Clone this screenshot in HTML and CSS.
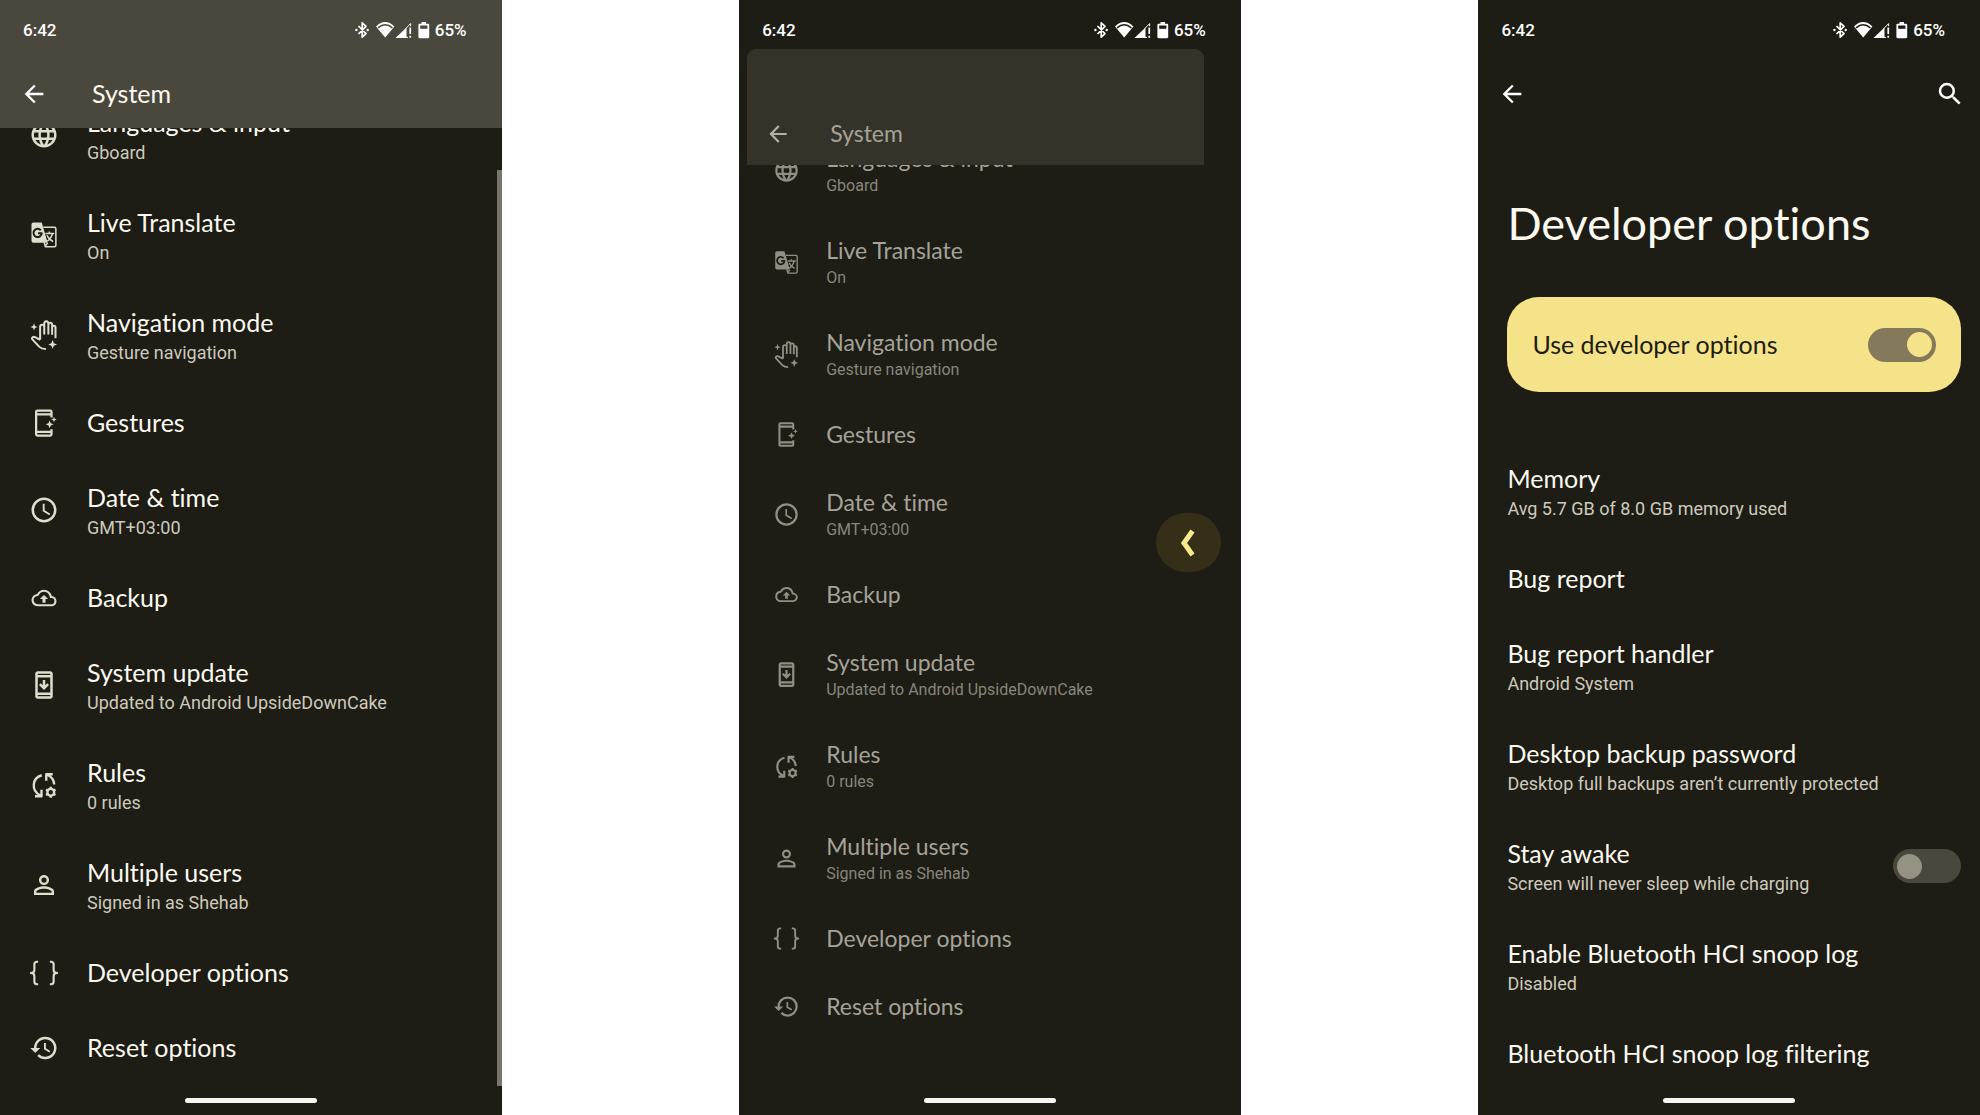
FILE: index.html
```html
<!DOCTYPE html>
<html lang="en">
<head>
    <meta charset="UTF-8">
    <meta name="viewport" content="width=device-width, initial-scale=1.0">
    <title>Predictive back gesture</title>
    <link rel="stylesheet" href="styles.css">
</head>
<body>
    <!-- Icon set -->
    <svg class="icon-defs" aria-hidden="true">
        <symbol id="i-back" viewBox="0 0 24 24"><path d="M20 11H7.83l5.59-5.59L12 4l-8 8 8 8 1.41-1.41L7.83 13H20z"/></symbol>
        <symbol id="i-search" viewBox="0 0 24 24"><path d="M15.5 14h-.79l-.28-.27A6.47 6.47 0 0 0 16 9.5 6.5 6.5 0 1 0 9.5 16c1.61 0 3.09-.59 4.23-1.57l.27.28v.79l5 4.99L20.49 19zm-6 0a4.5 4.5 0 1 1 0-9 4.5 4.5 0 0 1 0 9z"/></symbol>
        <symbol id="i-globe" viewBox="0 0 24 24"><path d="M11.99 2C6.47 2 2 6.48 2 12s4.47 10 9.99 10C17.52 22 22 17.52 22 12S17.52 2 11.99 2zm6.93 6h-2.95a15.65 15.65 0 0 0-1.38-3.56A8.03 8.03 0 0 1 18.92 8zM12 4.04c.83 1.2 1.48 2.53 1.91 3.96h-3.82c.43-1.43 1.08-2.76 1.91-3.96zM4.26 14C4.1 13.36 4 12.69 4 12s.1-1.36.26-2h3.38c-.08.66-.14 1.32-.14 2s.06 1.34.14 2zm.82 2h2.95c.32 1.25.78 2.45 1.38 3.56A7.99 7.99 0 0 1 5.08 16zm2.95-8H5.08a7.99 7.99 0 0 1 4.33-3.56A15.65 15.65 0 0 0 8.03 8zM12 19.96c-.83-1.2-1.48-2.53-1.91-3.96h3.82c-.43 1.43-1.08 2.76-1.91 3.96zM14.34 14H9.66c-.09-.66-.16-1.32-.16-2s.07-1.35.16-2h4.68c.09.65.16 1.32.16 2s-.07 1.34-.16 2zm.25 5.56c.6-1.11 1.06-2.31 1.38-3.56h2.95a8.03 8.03 0 0 1-4.33 3.56zM16.36 14c.08-.66.14-1.32.14-2s-.06-1.34-.14-2h3.38c.16.64.26 1.31.26 2s-.1 1.36-.26 2z"/></symbol>
        <symbol id="i-translate" viewBox="0 0 24 24">
            <path d="M3.600 2H10.200L14.900 18.200H3.600C2.700 18.200 2 17.500 2 16.600V3.600C2 2.700 2.700 2 3.600 2z"/>
            <g class="stroke">
                <path stroke-width="1.200" d="M11.500 5.700H20.300C21 5.700 21.500 6.200 21.500 6.900V20.200C21.500 20.900 21 21.400 20.300 21.400H13.200L12.200 18"/>
                <path stroke-width="1.200" d="M13.100 10.700H20.200M16.300 9.200V10.700M18.800 10.700C18.300 13.200 16.500 15.600 14.600 17M14.300 12.300C15.400 14.400 17.300 16.300 19.300 17.300M15 18.300L12.700 21.200"/>
                <path class="cut" stroke-width="1.600" d="M9.400 8.200A3.300 3.300 0 1 0 10.200 10.600H7.200"/>
            </g>
        </symbol>
        <symbol id="i-hand" viewBox="0 0 24 24">
            <g class="stroke" stroke-width="1.600">
                <path d="M8.900 15.800V5.400C8.900 3.200 12.200 3.200 12.200 5.400V11.500M12.200 5.400V3C12.200.3 15.500.3 15.500 3V11.500M15.500 4C15.500 1.500 18.500 1.500 18.500 4V11.800M18.500 6C18.500 4.200 21.200 4.200 21.200 6V14.500M8.900 15.800L4.800 13.700C3.200 13 1.700 14.500 2.700 15.500L8.300 21.500C9.500 22.700 10.500 23.200 13.500 23.200"/>
            </g>
            <path d="M4 2.600L4.800 4.700 6.900 5.500 4.800 6.300 4 8.400 3.200 6.300 1.100 5.500 3.200 4.700zM18.900 16L19.900 18.500 22.400 19.500 19.900 20.500 18.900 23 17.900 20.500 15.400 19.500 17.900 18.500z"/>
        </symbol>
        <symbol id="i-gestures" viewBox="0 0 24 24">
            <g class="stroke" stroke-width="1.800">
                <path d="M18 7.500V3C18 2.300 17.700 2 17 2H6.700C6 2 5.700 2.300 5.700 3V21C5.700 21.700 6 22 6.700 22H17C17.700 22 18 21.700 18 21V17M5.700 5H18M5.700 19H18"/>
            </g>
            <path d="M16.500 9.900L17.400 12.100 19.600 13 17.400 13.900 16.500 16.100 15.600 13.900 13.400 13 15.600 12.100zM20 7L20.600 8.600 22.200 9.200 20.600 9.800 20 11.400 19.400 9.800 17.800 9.200 19.400 8.600z"/>
        </symbol>
        <symbol id="i-clock" viewBox="0 0 24 24"><path d="M11.990 2C6.470 2 2 6.480 2 12s4.470 10 9.990 10C17.520 22 22 17.520 22 12S17.520 2 11.990 2zM12 20a8 8 0 1 1 0-16 8 8 0 0 1 0 16zm.5-13H11v6l5.250 3.150.75-1.230-4.500-2.670z"/></symbol>
        <symbol id="i-cloud" viewBox="-2.400 -2.400 28.800 28.800"><path d="M19.350 10.040A7.490 7.490 0 0 0 12 4C9.110 4 6.600 5.640 5.350 8.040A5.994 5.994 0 0 0 0 14c0 3.310 2.690 6 6 6h13c2.760 0 5-2.240 5-5 0-2.640-2.050-4.780-4.650-4.960zM19 18H6c-2.210 0-4-1.790-4-4 0-2.050 1.530-3.760 3.560-3.970l1.070-.110.500-.950A5.469 5.469 0 0 1 12 6c2.620 0 4.880 1.860 5.390 4.430l.300 1.500 1.530.110A2.980 2.980 0 0 1 22 15c0 1.650-1.350 3-3 3zM8 13h2.550v3.500h2.900V13H16l-4-4z"/></symbol>
        <symbol id="i-update" viewBox="0 0 24 24"><path d="M17 1H7c-1.100 0-2 .9-2 2v18c0 1.100.9 2 2 2h10c1.100 0 2-.9 2-2V3c0-1.100-.9-2-2-2zm0 20H7v-1h10zm0-3H7V6h10zm0-14H7V3h10zM16 12l-1.410-1.410L13 12.170V8h-2v4.170l-1.590-1.580L8 12l4 4z"/></symbol>
        <symbol id="i-rules" viewBox="0 0 24 24">
            <g class="stroke" stroke-width="1.900">
                <path d="M10.200 4.200C2.300 6.500 1.500 16.500 9 20.300M4.800 21H10V15.800M13.800 8.600V3.400H19M13.900 3.600C17.800 5 20 8 20.200 11.600"/>
                <circle cx="17.400" cy="17.800" r="2.700"/>
                <path d="M17.400 13.400V15M17.400 20.600V22.200M13.600 15.600L15 16.400M19.800 19.200L21.200 20M13.600 20L15 19.200M19.800 16.400L21.200 15.600"/>
            </g>
        </symbol>
        <symbol id="i-person" viewBox="0 0 24 24"><path d="M12 5.900a2.100 2.100 0 1 1 0 4.200 2.100 2.100 0 0 1 0-4.200m0 9c2.970 0 6.100 1.460 6.100 2.100v1.100H5.900V17c0-.640 3.130-2.100 6.100-2.100M12 4C9.790 4 8 5.790 8 8s1.790 4 4 4 4-1.790 4-4-1.790-4-4-4zm0 9c-2.670 0-8 1.340-8 4v3h16v-3c0-2.660-5.330-4-8-4z"/></symbol>
        <symbol id="i-braces" viewBox="0 0 24 24">
            <g class="stroke" stroke-width="1.700">
                <path d="M7.300 3H6.500C5 3 4.300 3.700 4.300 5V9.500C4.300 11 3.500 12 1.500 12C3.500 12 4.300 13 4.300 14.500V19C4.300 20.300 5 21 6.500 21H7.300M16.700 3H17.500C19 3 19.700 3.700 19.700 5V9.500C19.700 11 20.500 12 22.500 12C20.500 12 19.700 13 19.700 14.500V19C19.700 20.300 19 21 17.500 21H16.700"/>
            </g>
        </symbol>
        <symbol id="i-history" viewBox="0 0 24 24"><path d="M13 3a9 9 0 0 0-9 9H1l3.890 3.890.070.140L9 12H6c0-3.870 3.130-7 7-7s7 3.130 7 7-3.130 7-7 7a6.979 6.979 0 0 1-4.940-2.060l-1.420 1.420A8.954 8.954 0 0 0 13 21a9 9 0 0 0 0-18zm-1 5v5l4.280 2.540.720-1.210-3.500-2.080V8z"/></symbol>
        <symbol id="i-status" viewBox="0 0 76 18">
            <!-- bluetooth -->
            <g class="stroke" stroke-width="1.700">
                <path d="M3.500 5L11 12.700 7.200 16.200V1.800L11 5.300 3.500 13"/>
            </g>
            <circle cx="1.400" cy="9" r="1.200"/><circle cx="12.700" cy="9" r="1.200"/>
            <!-- wifi -->
            <path d="M21 5.500Q30.200-3.300 39.400 5.500L30.200 16.500z"/>
            <path class="cut-line" d="M23 6.800Q30.200.8 37.400 6.800"/>
            <!-- mobile signal -->
            <path d="M40.500 17L51.500 6.500V17z"/>
            <path class="stroke" d="M50.500 7.800L55.600 2.600V5.200M51 16.400H53"/>
            <path d="M54.400 6.500H56.100V13H54.400zM54.400 14.800H56.100V16.800H54.400z"/>
            <!-- battery -->
            <path d="M66.500 1H71V2.700H73C73.700 2.700 74.200 3.200 74.200 3.900V16C74.200 16.700 73.700 17.200 73 17.200H64.600C63.900 17.200 63.400 16.700 63.400 16V3.900C63.400 3.200 63.900 2.700 64.600 2.700H66.500z"/>
            <path class="cut-fill" d="M65.200 4.500H72.400V7.800H65.200z"/>
        </symbol>
    </svg>

    <main class="screens">
        <!-- Screen 1: System -->
        <section class="phone phone-system">
            <div class="status-bar">
                <span>6:42</span>
                <span class="status-right"><svg class="status-icons"><use href="#i-status"/></svg>65%</span>
            </div>
            <header class="toolbar">
                <button class="icon-button" aria-label="Back"><svg class="icon"><use href="#i-back"/></svg></button>
                <h1 class="toolbar-title">System</h1>
            </header>
            <nav class="settings-list scrolled">
                <a class="row" href="#"><svg class="icon"><use href="#i-globe"/></svg><span class="row-text"><span class="row-title">Languages &amp; input</span><span class="row-sub">Gboard</span></span></a>
                <a class="row" href="#"><svg class="icon"><use href="#i-translate"/></svg><span class="row-text"><span class="row-title">Live Translate</span><span class="row-sub">On</span></span></a>
                <a class="row" href="#"><svg class="icon"><use href="#i-hand"/></svg><span class="row-text"><span class="row-title">Navigation mode</span><span class="row-sub">Gesture navigation</span></span></a>
                <a class="row" href="#"><svg class="icon"><use href="#i-gestures"/></svg><span class="row-text"><span class="row-title">Gestures</span></span></a>
                <a class="row" href="#"><svg class="icon"><use href="#i-clock"/></svg><span class="row-text"><span class="row-title">Date &amp; time</span><span class="row-sub">GMT+03:00</span></span></a>
                <a class="row" href="#"><svg class="icon"><use href="#i-cloud"/></svg><span class="row-text"><span class="row-title">Backup</span></span></a>
                <a class="row" href="#"><svg class="icon"><use href="#i-update"/></svg><span class="row-text"><span class="row-title">System update</span><span class="row-sub">Updated to Android UpsideDownCake</span></span></a>
                <a class="row" href="#"><svg class="icon"><use href="#i-rules"/></svg><span class="row-text"><span class="row-title">Rules</span><span class="row-sub">0 rules</span></span></a>
                <a class="row" href="#"><svg class="icon"><use href="#i-person"/></svg><span class="row-text"><span class="row-title">Multiple users</span><span class="row-sub">Signed in as Shehab</span></span></a>
                <a class="row" href="#"><svg class="icon"><use href="#i-braces"/></svg><span class="row-text"><span class="row-title">Developer options</span></span></a>
                <a class="row" href="#"><svg class="icon"><use href="#i-history"/></svg><span class="row-text"><span class="row-title">Reset options</span></span></a>
            </nav>
            <div class="scrollbar"></div>
            <div class="home-pill"></div>
        </section>

        <!-- Screen 2: System shrinking during the back gesture -->
        <section class="phone phone-gesture">
            <div class="status-bar">
                <span>6:42</span>
                <span class="status-right"><svg class="status-icons"><use href="#i-status"/></svg>65%</span>
            </div>
            <div class="preview">
                <header class="toolbar">
                    <button class="icon-button" aria-label="Back"><svg class="icon"><use href="#i-back"/></svg></button>
                    <h1 class="toolbar-title">System</h1>
                </header>
                <nav class="settings-list scrolled">
                    <a class="row" href="#"><svg class="icon"><use href="#i-globe"/></svg><span class="row-text"><span class="row-title">Languages &amp; input</span><span class="row-sub">Gboard</span></span></a>
                    <a class="row" href="#"><svg class="icon"><use href="#i-translate"/></svg><span class="row-text"><span class="row-title">Live Translate</span><span class="row-sub">On</span></span></a>
                    <a class="row" href="#"><svg class="icon"><use href="#i-hand"/></svg><span class="row-text"><span class="row-title">Navigation mode</span><span class="row-sub">Gesture navigation</span></span></a>
                    <a class="row" href="#"><svg class="icon"><use href="#i-gestures"/></svg><span class="row-text"><span class="row-title">Gestures</span></span></a>
                    <a class="row" href="#"><svg class="icon"><use href="#i-clock"/></svg><span class="row-text"><span class="row-title">Date &amp; time</span><span class="row-sub">GMT+03:00</span></span></a>
                    <a class="row" href="#"><svg class="icon"><use href="#i-cloud"/></svg><span class="row-text"><span class="row-title">Backup</span></span></a>
                    <a class="row" href="#"><svg class="icon"><use href="#i-update"/></svg><span class="row-text"><span class="row-title">System update</span><span class="row-sub">Updated to Android UpsideDownCake</span></span></a>
                    <a class="row" href="#"><svg class="icon"><use href="#i-rules"/></svg><span class="row-text"><span class="row-title">Rules</span><span class="row-sub">0 rules</span></span></a>
                    <a class="row" href="#"><svg class="icon"><use href="#i-person"/></svg><span class="row-text"><span class="row-title">Multiple users</span><span class="row-sub">Signed in as Shehab</span></span></a>
                    <a class="row" href="#"><svg class="icon"><use href="#i-braces"/></svg><span class="row-text"><span class="row-title">Developer options</span></span></a>
                    <a class="row" href="#"><svg class="icon"><use href="#i-history"/></svg><span class="row-text"><span class="row-title">Reset options</span></span></a>
                </nav>
            </div>
            <div class="back-bubble"><svg viewBox="0 0 16 28"><path d="M12.500 2L4 14l8.500 12"/></svg></div>
            <div class="home-pill"></div>
        </section>

        <!-- Screen 3: Developer options -->
        <section class="phone phone-developer">
            <div class="status-bar">
                <span>6:42</span>
                <span class="status-right"><svg class="status-icons"><use href="#i-status"/></svg>65%</span>
            </div>
            <header class="toolbar">
                <button class="icon-button" aria-label="Back"><svg class="icon"><use href="#i-back"/></svg></button>
                <button class="icon-button search" aria-label="Search"><svg class="icon"><use href="#i-search"/></svg></button>
            </header>
            <h1 class="page-title">Developer options</h1>
            <label class="main-switch" for="use-dev">
                <span class="row-title">Use developer options</span>
                <input class="switch" type="checkbox" id="use-dev" checked>
            </label>
            <div class="settings-list">
                <a class="row" href="#"><span class="row-text"><span class="row-title">Memory</span><span class="row-sub">Avg 5.7 GB of 8.0 GB memory used</span></span></a>
                <a class="row" href="#"><span class="row-text"><span class="row-title">Bug report</span></span></a>
                <a class="row" href="#"><span class="row-text"><span class="row-title">Bug report handler</span><span class="row-sub">Android System</span></span></a>
                <a class="row" href="#"><span class="row-text"><span class="row-title">Desktop backup password</span><span class="row-sub">Desktop full backups aren’t currently protected</span></span></a>
                <label class="row" for="stay-awake"><span class="row-text"><span class="row-title">Stay awake</span><span class="row-sub">Screen will never sleep while charging</span></span><input class="switch" type="checkbox" id="stay-awake"></label>
                <a class="row" href="#"><span class="row-text"><span class="row-title">Enable Bluetooth HCI snoop log</span><span class="row-sub">Disabled</span></span></a>
                <a class="row" href="#"><span class="row-text"><span class="row-title">Bluetooth HCI snoop log filtering</span></span></a>
            </div>
            <div class="home-pill"></div>
        </section>
    </main>
</body>
</html>
```
FILE: styles.css
```css
* {
    box-sizing: border-box;
}

body {
    margin: 0;
    background-color: #fff;
    font-family: Lato, "Open Sans", sans-serif;
    font-variant-ligatures: none;
}

.icon-defs {
    display: none;
}

.screens {
    display: grid;
    grid-template-columns: repeat(3, 1fr);
    column-gap: 12%;
    min-height: 100vh;
}

.phone {
    --bg: #1d1c15;
    --bar: #4a483c;
    --title: #fbf9f0;
    --sub: #cdcabc;
    --icon: #e0ddcd;
    --title-size: 25px;
    --sub-size: 18px;
    --title-line: 35px;
    --sub-line: 25px;
    --row-pad: 20px;
    --icon-size: 30px;
    --row-left: 29px;
    --row-gap: 28px;
    --hidden-part: 43px;
    --toolbar-bg: transparent;
    position: relative;
    display: flex;
    flex-direction: column;
    min-width: 0;
    background-color: var(--bg);
    color: var(--title);
    overflow: hidden;
}

.phone-system {
    --toolbar-bg: var(--bar);
}

/* Status bar */

.status-bar {
    display: flex;
    justify-content: space-between;
    align-items: center;
    height: 60px;
    padding: 0 35px 0 23px;
    font-family: Roboto, sans-serif;
    font-size: 17px;
    font-weight: 500;
    color: #fff;
}

.phone-system .status-bar {
    background-color: var(--bar);
}

.phone-system .status-icons {
    --bg: var(--bar);
}

.status-right {
    display: flex;
    align-items: center;
    gap: 4px;
}

.status-icons {
    width: 76px;
    height: 18px;
    fill: currentColor;
}

/* Toolbar */

.toolbar {
    display: flex;
    align-items: center;
    height: 68px;
    padding: 0 15px 0 20px;
    background-color: var(--toolbar-bg);
}

.icon-button {
    display: flex;
    padding: 0;
    border: none;
    background: none;
    color: #fff;
    cursor: pointer;
    --icon-size: 28px;
}

.icon-button.search {
    margin-left: auto;
    --icon-size: 30px;
}

.toolbar-title {
    margin: 0 0 0 44px;
    padding-bottom: 2px;
    font-size: var(--title-size);
    font-weight: normal;
}

.icon {
    flex: none;
    width: var(--icon-size);
    height: var(--icon-size);
    fill: currentColor;
}

.stroke {
    fill: none;
    stroke: currentColor;
    stroke-linejoin: round;
}

.cut {
    stroke: var(--bg);
}

.cut-line {
    fill: none;
    stroke: var(--bg);
    stroke-width: 1.5;
}

.cut-fill {
    fill: var(--bg);
}

/* Settings list */

.settings-list {
    display: flex;
    flex-direction: column;
    overflow: hidden;
}

.scrolled .row:first-child {
    margin-top: calc(-1 * var(--hidden-part));
}

.row {
    display: flex;
    align-items: center;
    gap: var(--row-gap);
    padding: var(--row-pad) 19px var(--row-pad) var(--row-left);
    color: inherit;
    text-decoration: none;
    cursor: pointer;
}

.row .icon {
    color: var(--icon);
}

.row-text {
    display: flex;
    flex-direction: column;
    flex: 1;
    white-space: nowrap;
}

.row-title {
    font-size: var(--title-size);
    line-height: var(--title-line);
}

.row-sub {
    font-family: Roboto, sans-serif;
    font-size: var(--sub-size);
    line-height: var(--sub-line);
    color: var(--sub);
}

.scrollbar {
    position: absolute;
    top: 170px;
    right: 0;
    bottom: 29px;
    width: 5px;
    background-color: #77756a;
}

.home-pill {
    position: absolute;
    left: 50%;
    bottom: 12px;
    width: 132px;
    height: 5px;
    margin-left: -66px;
    border-radius: 3px;
    background-color: #f7f5f1;
}

/* Back gesture preview */

.preview {
    --title: #a5a399;
    --sub: #88867b;
    --icon: #918f83;
    --toolbar-bg: #353329;
    --title-size: 23px;
    --sub-size: 16px;
    --title-line: 32px;
    --sub-line: 24px;
    --row-pad: 18px;
    --icon-size: 27px;
    --row-left: 26px;
    --row-gap: 26px;
    --hidden-part: 41px;
    margin: -11px 37px 0 8px;
    border-radius: 9px 9px 0 0;
    overflow: hidden;
    color: var(--title);
}

.preview .toolbar {
    height: 116px;
    padding: 54px 15px 0 18px;
}

.preview .icon-button {
    color: #b3b1a6;
    --icon-size: 26px;
}

.preview .toolbar-title {
    margin-left: 39px;
}

.back-bubble {
    position: absolute;
    top: 513px;
    right: 20px;
    display: flex;
    align-items: center;
    justify-content: center;
    width: 65px;
    height: 59px;
    border-radius: 30px;
    background-color: #352f18;
}

.back-bubble svg {
    width: 16px;
    height: 28px;
    fill: none;
    stroke: #f7e98f;
    stroke-width: 5;
}

/* Developer options */

.page-title {
    margin: 65px 29px 44px;
    font-size: 45px;
    line-height: 60px;
    font-weight: normal;
}

.main-switch {
    display: flex;
    align-items: center;
    justify-content: space-between;
    margin: 0 19px 49px 29px;
    padding: 30px 25px;
    border-radius: 32px;
    background-color: #f4e388;
    color: #1d1c10;
    cursor: pointer;
}

.switch {
    appearance: none;
    display: flex;
    align-items: center;
    flex: none;
    width: 68px;
    height: 34px;
    margin: 0;
    padding: 0 4px;
    border-radius: 17px;
    background-color: #4a483c;
    cursor: pointer;
}

.switch::before {
    content: "";
    width: 25px;
    height: 25px;
    border-radius: 50%;
    background-color: #959284;
}

.switch:checked {
    justify-content: flex-end;
    background-color: #84795a;
}

.switch:checked::before {
    background-color: #f4e388;
}
```
